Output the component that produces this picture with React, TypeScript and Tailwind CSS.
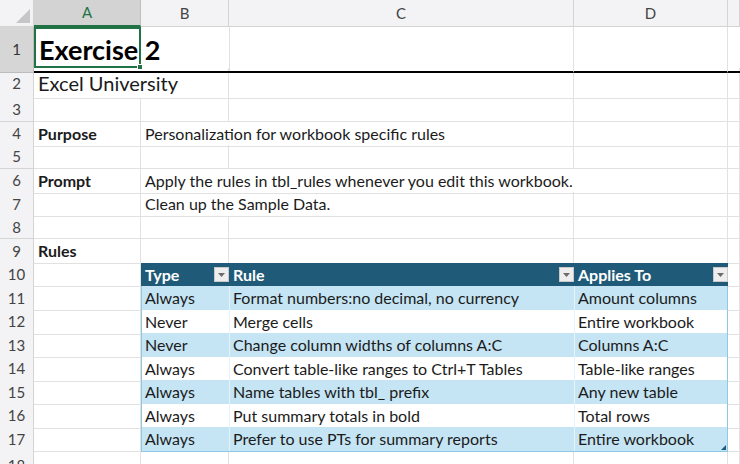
import React from 'react';

const GRID = 'grid grid-cols-[34px_107px_88px_345px_154px_1fr]';
const line = 'border-r border-b border-[#e1e1e1]';

type Rule = { type: string; rule: string; applies: string };

const rules: Rule[] = [
  { type: 'Always', rule: 'Format numbers:no decimal, no currency', applies: 'Amount columns' },
  { type: 'Never', rule: 'Merge cells', applies: 'Entire workbook' },
  { type: 'Never', rule: 'Change column widths of columns A:C', applies: 'Columns A:C' },
  { type: 'Always', rule: 'Convert table-like ranges to Ctrl+T Tables', applies: 'Table-like ranges' },
  { type: 'Always', rule: 'Name tables with tbl_ prefix', applies: 'Any new table' },
  { type: 'Always', rule: 'Put summary totals in bold', applies: 'Total rows' },
  { type: 'Always', rule: 'Prefer to use PTs for summary reports', applies: 'Entire workbook' },
];

function RowNum({ n, active }: { n: number | string; active?: boolean }) {
  return (
    <div
      className={`flex items-center justify-center border-r border-b text-[15px] ${
        active ? 'bg-[#d6d6d6] border-[#bdbdbd] text-[#333]' : 'bg-[#f3f2f5] border-[#d4d4d4] text-[#444]'
      }`}
    >
      {n}
    </div>
  );
}

function Cell({ children, className = '' }: { children?: React.ReactNode; className?: string }) {
  return (
    <div className={`flex items-center px-[4px] whitespace-nowrap overflow-visible ${line} ${className}`}>
      {children}
    </div>
  );
}

function FilterButton() {
  return (
    <span className="ml-auto flex h-[15px] w-[15px] items-center justify-center bg-[#eeeeee] border border-[#c9c9c9]">
      <svg width="7" height="4" viewBox="0 0 7 4">
        <path d="M0 0h7L3.5 4z" fill="#6b6b6b" />
      </svg>
    </span>
  );
}

export default function App() {
  const rowH = 'h-[23.5px]';

  return (
    <div className="w-[740px] h-[464px] overflow-hidden bg-white text-[#1b1b1b] font-['Lato','Liberation_Sans',sans-serif] text-[16px]">
      {/* Column headers */}
      <div className={`${GRID} h-[27px]`}>
        <div className="relative bg-[#f3f2f5] border-r border-b border-[#d4d4d4]">
          <svg className="absolute right-[3px] bottom-[3px]" width="14" height="14" viewBox="0 0 14 14">
            <path d="M14 0V14H0z" fill="#c6c6c6" />
          </svg>
        </div>
        <div className="flex items-center justify-center bg-[#d3d3d3] border-r border-b-2 border-[#bfbfbf] border-b-[#217346] text-[#217346] text-[15px]">
          A
        </div>
        {['B', 'C', 'D', ''].map((c, i) => (
          <div
            key={i}
            className="flex items-center justify-center bg-[#f3f2f5] border-r border-b border-[#d4d4d4] text-[#444] text-[15px]"
          >
            {c}
          </div>
        ))}
      </div>

      {/* Row 1 */}
      <div className={`${GRID} h-[41px] relative`}>
        <RowNum n={1} active />
        <div className="col-span-2 flex items-center px-[5px] pt-[3px] border-b-2 border-b-black whitespace-nowrap text-[27px] font-bold text-black relative">
          <span>Exercise 2</span>
          <span className="absolute left-[195px] top-0 bottom-0 border-r border-[#e1e1e1]" />
        </div>
        <div className="border-r border-b-2 border-[#e1e1e1] border-b-black" />
        <div className="border-r border-b-2 border-[#e1e1e1] border-b-black" />
        <div className="border-b-2 border-b-black" />
        {/* selection box on A1 */}
        <div className="absolute left-[34px] top-0 w-[107px] h-[41px] border-2 border-[#217346]">
          <div className="absolute right-[-4px] bottom-[-4px] w-[6px] h-[6px] bg-[#217346] border border-white" />
        </div>
      </div>

      {/* Row 2 */}
      <div className={`${GRID} h-[30px]`}>
        <RowNum n={2} />
        <Cell className="col-span-2 text-[20px]">Excel University</Cell>
        <Cell />
        <Cell />
        <Cell />
      </div>

      {/* Row 3 */}
      <div className={`${GRID} ${rowH}`}>
        <RowNum n={3} />
        <Cell />
        <Cell />
        <Cell />
        <Cell />
        <Cell />
      </div>

      {/* Row 4 */}
      <div className={`${GRID} ${rowH}`}>
        <RowNum n={4} />
        <Cell className="font-bold">Purpose</Cell>
        <Cell className="col-span-2">Personalization for workbook specific rules</Cell>
        <Cell />
        <Cell />
      </div>

      {/* Row 5 */}
      <div className={`${GRID} ${rowH}`}>
        <RowNum n={5} />
        <Cell />
        <Cell />
        <Cell />
        <Cell />
        <Cell />
      </div>

      {/* Row 6 */}
      <div className={`${GRID} ${rowH}`}>
        <RowNum n={6} />
        <Cell className="font-bold">Prompt</Cell>
        <Cell className="col-span-3">Apply the rules in tbl_rules whenever you edit this workbook.</Cell>
        <Cell />
      </div>

      {/* Row 7 */}
      <div className={`${GRID} ${rowH}`}>
        <RowNum n={7} />
        <Cell />
        <Cell className="col-span-2">Clean up the Sample Data.</Cell>
        <Cell />
        <Cell />
      </div>

      {/* Row 8 */}
      <div className={`${GRID} ${rowH}`}>
        <RowNum n={8} />
        <Cell />
        <Cell />
        <Cell />
        <Cell />
        <Cell />
      </div>

      {/* Row 9 */}
      <div className={`${GRID} ${rowH}`}>
        <RowNum n={9} />
        <Cell className="font-bold">Rules</Cell>
        <Cell />
        <Cell />
        <Cell />
        <Cell />
      </div>

      {/* Row 10 - table header */}
      <div className={`${GRID} ${rowH}`}>
        <RowNum n={10} />
        <Cell />
        <div className="col-span-3 grid grid-cols-[88px_345px_154px] bg-[#1f5b78] text-white font-bold border-x border-[#1f5b78]">
          {['Type', 'Rule', 'Applies To'].map((h) => (
            <div key={h} className="flex items-center pl-[3px] pr-[1px]">
              <span>{h}</span>
              <FilterButton />
            </div>
          ))}
        </div>
        <Cell />
      </div>

      {/* Rows 11-17 - table body */}
      {rules.map((r, i) => {
        const band = i % 2 === 0;
        const last = i === rules.length - 1;
        return (
          <div key={i} className={`${GRID} ${rowH}`}>
            <RowNum n={11 + i} />
            <Cell />
            <div
              className={`relative col-span-3 grid grid-cols-[88px_345px_154px] border-x border-b border-[#8ec8e4] ${
                band ? 'bg-[#c5e5f4]' : 'bg-white'
              }`}
            >
              <div className="flex items-center pl-[3px] border-r border-[#e6f3fa] whitespace-nowrap">{r.type}</div>
              <div className="flex items-center pl-[3px] border-r border-[#e6f3fa] whitespace-nowrap">{r.rule}</div>
              <div className="flex items-center pl-[3px] whitespace-nowrap">{r.applies}</div>
              {last && (
                <svg className="absolute right-[1px] bottom-[1px]" width="5" height="5" viewBox="0 0 5 5">
                  <path d="M5 0V5H0z" fill="#1f5b78" />
                </svg>
              )}
            </div>
            <Cell />
          </div>
        );
      })}

      {/* Row 18 */}
      <div className={`${GRID} h-[30px]`}>
        <RowNum n={18} />
        <Cell />
        <Cell />
        <Cell />
        <Cell />
        <Cell />
      </div>
    </div>
  );
}
